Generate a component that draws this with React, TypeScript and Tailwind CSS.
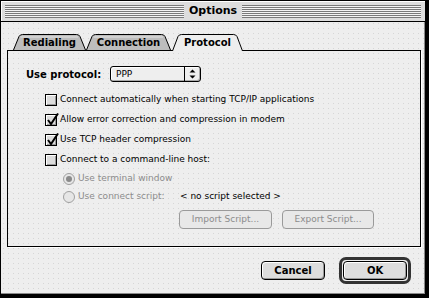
import React from "react";

const chicago = "font-['DejaVu_Sans',sans-serif] font-bold text-[10px] text-black";
const geneva = "font-['DejaVu_Sans',sans-serif] text-[9px]";

function Tab({ label, width, active }: { label: string; width: number; active?: boolean }) {
    const h = active ? 17 : 16;
    const w = width;
    return (
        <div
            className={`relative flex justify-center pt-[2px] ${active ? "z-10 -mb-px h-[17px]" : "h-[16px]"}`}
            style={{ width: w }}
        >
            <svg className="absolute inset-0" width={w} height={h} viewBox={`0 0 ${w} ${h}`}>
                <path
                    d={`M0.5,${h} L6,2.5 Q7,0.5 9.5,0.5 L${w - 9.5},0.5 Q${w - 7},0.5 ${w - 6},2.5 L${w - 0.5},${h}`}
                    fill={active ? "#eeeeee" : "#bdbdbd"}
                    stroke="#000"
                    strokeWidth="1"
                />
                {!active && <path d={`M7.5,3 L${w - 8},3`} stroke="#e4e4e4" strokeWidth="1" />}
            </svg>
            <span className={`relative ${chicago} leading-[14px]`}>{label}</span>
        </div>
    );
}

function Checkbox({ checked, label }: { checked?: boolean; label: string }) {
    return (
        <div className="flex items-center h-[20px] gap-[3px]">
            <div className="relative w-[12px] h-[12px] border border-black bg-[#dddddd] shadow-[inset_1px_1px_0_#ffffff,inset_-1px_-1px_0_#999999]">
                {checked && (
                    <svg className="absolute -left-px -top-[3px]" width="15" height="15" viewBox="0 0 15 15">
                        <path d="M3,8 L6,12 L13,1.5" fill="none" stroke="#000" strokeWidth="2" />
                    </svg>
                )}
            </div>
            <span className={`${geneva} text-black`}>{label}</span>
        </div>
    );
}

function Radio({ selected, label }: { selected?: boolean; label: string }) {
    return (
        <div className="flex items-center h-[18px] gap-[3px]">
            <div className="w-[12px] h-[12px] rounded-full border border-[#a0a0a0] bg-[#e6e6e6] flex items-center justify-center">
                {selected && <div className="w-[6px] h-[6px] rounded-full bg-[#8a8a8a]" />}
            </div>
            <span className={`${geneva} text-[#8c8c8c]`}>{label}</span>
        </div>
    );
}

function PushButton({ label, width, disabled }: { label: string; width: number; disabled?: boolean }) {
    return (
        <div
            className={`h-[19px] rounded-[4px] border flex items-center justify-center ${
                disabled
                    ? `border-[#9a9a9a] bg-[#e8e8e8] ${geneva} text-[#8c8c8c]`
                    : `border-black bg-[#dddddd] shadow-[inset_1px_1px_0_#ffffff,inset_-1px_-1px_0_#999999] ${chicago} text-[10.5px]`
            }`}
            style={{ width }}
        >
            {label}
        </div>
    );
}

export default function App() {
    return (
        <div className="w-[429px] h-[298px] bg-white">
            <div className="w-[429px] h-[298px] flex flex-col border-l border-t border-r-[4px] border-b-[4px] border-black bg-[#eeeeee] bg-[radial-gradient(circle,#d6d6d6_0.6px,transparent_0.8px)] bg-[length:5px_5px]">
                {/* Title bar */}
                <div className="h-[21px] flex items-center gap-[5px] px-[4px] border-b border-black bg-[#dddddd] shadow-[inset_1px_1px_0_#ffffff]">
                    <div className="flex-1 h-[13px] bg-[repeating-linear-gradient(to_bottom,#7a7a7a_0px,#7a7a7a_1px,#f4f4f4_1px,#f4f4f4_2px)]" />
                    <span className={`${chicago} text-[11px] leading-[14px]`}>Options</span>
                    <div className="flex-1 h-[13px] bg-[repeating-linear-gradient(to_bottom,#7a7a7a_0px,#7a7a7a_1px,#f4f4f4_1px,#f4f4f4_2px)]" />
                </div>

                <div className="flex-1 flex flex-col px-[6px] pt-[12px] border-r border-b border-[#8a8a8a]">
                    {/* Tabs */}
                    <div className="flex items-end pl-[6px] h-[16px]">
                        <Tab label="Redialing" width={73} />
                        <Tab label="Connection" width={85} />
                        <div className="w-px" />
                        <Tab label="Protocol" width={71} active />
                    </div>

                    {/* Panel */}
                    <div className="h-[197px] w-[414px] border border-black shadow-[1px_1px_0_#ffffff] flex flex-col pl-[18px] pt-[15px]">
                        <div className="flex items-center h-[16px]">
                            <span className={`${chicago} w-[84px]`}>Use protocol:</span>
                            <div className="w-[91px] h-[16px] rounded-[3px] border border-black bg-[#eeeeee] shadow-[inset_1px_1px_0_#ffffff,inset_-1px_-1px_0_#aaaaaa] flex">
                                <span className={`${geneva} text-black flex-1 pl-[5px] leading-[14px]`}>PPP</span>
                                <div className="w-[16px] border-l border-black flex items-center justify-center">
                                    <svg width="7" height="10" viewBox="0 0 7 10">
                                        <path d="M3.5,0.5 L6.5,3.5 L0.5,3.5 Z M0.5,6.5 L6.5,6.5 L3.5,9.5 Z" fill="#000" />
                                    </svg>
                                </div>
                            </div>
                        </div>

                        <div className="flex flex-col ml-[19px] mt-[8px]">
                            <Checkbox label="Connect automatically when starting TCP/IP applications" />
                            <Checkbox checked label="Allow error correction and compression in modem" />
                            <Checkbox checked label="Use TCP header compression" />
                            <Checkbox label="Connect to a command-line host:" />
                        </div>

                        <div className="flex flex-col ml-[37px]">
                            <Radio selected label="Use terminal window" />
                            <div className="flex items-center">
                                <div className="w-[117px]">
                                    <Radio label="Use connect script:" />
                                </div>
                                <span className={`${geneva} text-black`}>&lt; no script selected &gt;</span>
                            </div>
                        </div>

                        <div className="flex gap-[10px] ml-[153px] mt-[4px]">
                            <PushButton label="Import Script..." width={93} disabled />
                            <PushButton label="Export Script..." width={92} disabled />
                        </div>
                    </div>

                    {/* Dialog buttons */}
                    <div className="flex justify-end items-center gap-[14px] pr-[7px] mt-[10px]">
                        <PushButton label="Cancel" width={64} />
                        <div className="rounded-[7px] border-[3px] border-[#333333] p-px">
                            <PushButton label="OK" width={64} />
                        </div>
                    </div>
                </div>
            </div>
        </div>
    );
}
